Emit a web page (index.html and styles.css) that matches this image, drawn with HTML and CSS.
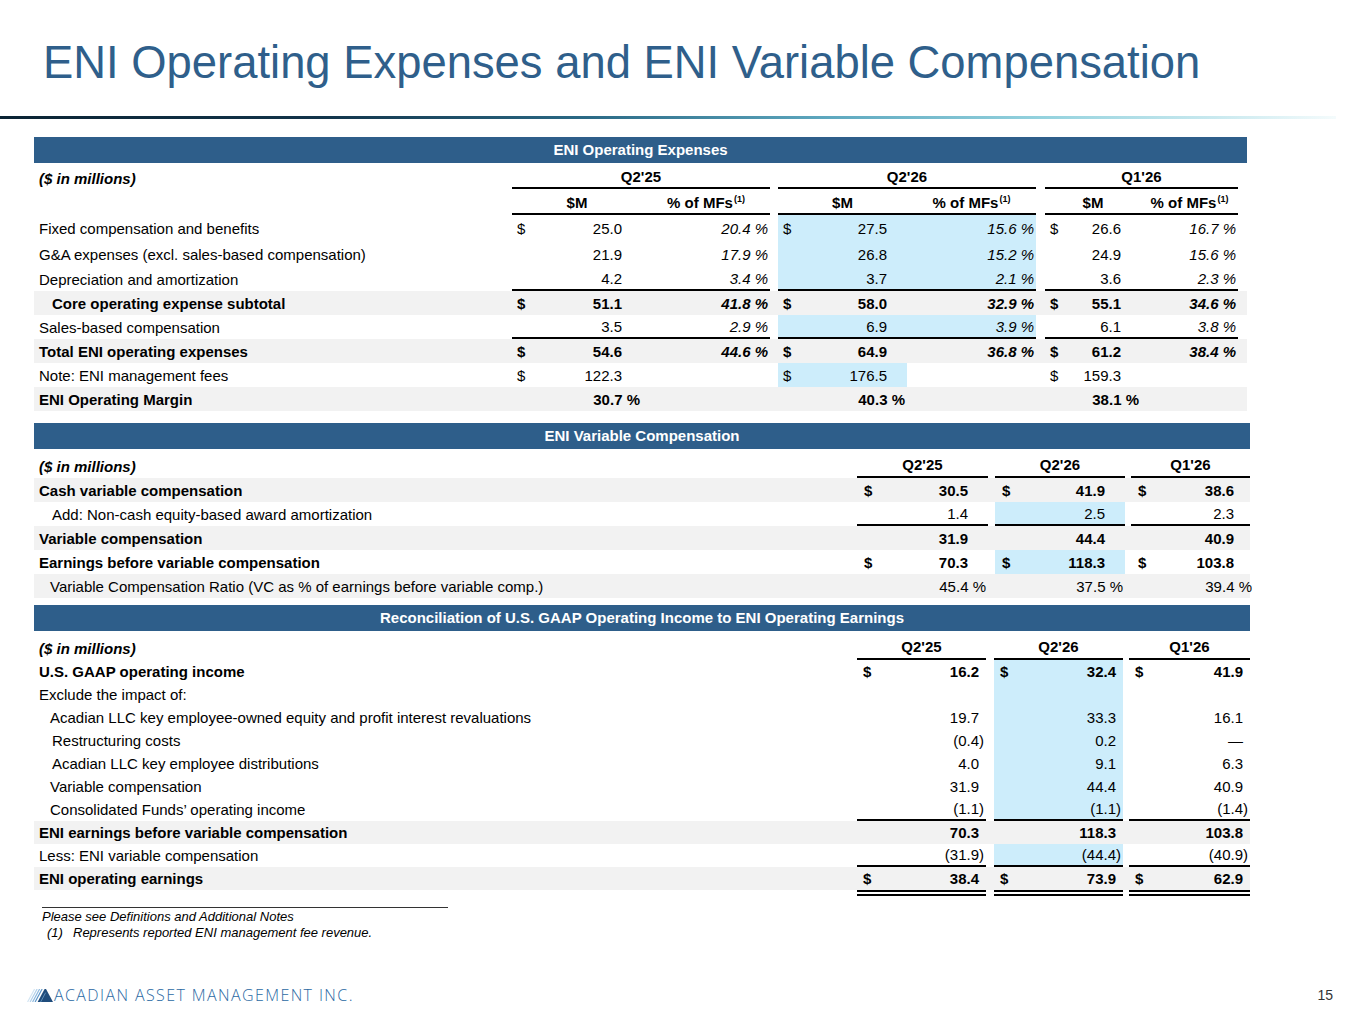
FILE: index.html
```html
<!DOCTYPE html>
<html>
<head>
<meta charset="utf-8">
<link rel="stylesheet" href="styles.css">
</head>
<body>
<h1 class="title">ENI Operating Expenses and ENI Variable Compensation</h1>
<div class="rule"></div>

<div class="tables">
  <!-- Table 1 -->
  <div class="tbl t1">
    <div class="bar">ENI Operating Expenses</div>
    <div class="row hdr h26">
      <div class="lbl b i">($ in millions)</div>
      <div class="ctr b ul span2">Q2'25</div><div></div>
      <div class="ctr b ul span2">Q2'26</div><div></div>
      <div class="ctr b ul span2">Q1'26</div><div></div>
    </div>
    <div class="row hdr h26">
      <div class="lbl"></div>
      <div class="ctr b ul">$M</div><div class="ctr b ul"><span>% of MFs<sup>(1)</sup></span></div><div></div>
      <div class="ctr b ul">$M</div><div class="ctr b ul"><span>% of MFs<sup>(1)</sup></span></div><div></div>
      <div class="ctr b ul">$M</div><div class="ctr b ul"><span>% of MFs<sup>(1)</sup></span></div><div></div>
    </div>
    <div class="row h26">
      <div class="lbl">Fixed compensation and benefits</div>
      <div class="m"><span>$</span><span>25.0</span></div><div class="p">20.4 %</div><div></div>
      <div class="m hl"><span>$</span><span>27.5</span></div><div class="p hl">15.6 %</div><div></div>
      <div class="m"><span>$</span><span>26.6</span></div><div class="p">16.7 %</div><div></div>
    </div>
    <div class="row h26">
      <div class="lbl">G&amp;A expenses (excl. sales-based compensation)</div>
      <div class="m"><span></span><span>21.9</span></div><div class="p">17.9 %</div><div></div>
      <div class="m hl"><span></span><span>26.8</span></div><div class="p hl">15.2 %</div><div></div>
      <div class="m"><span></span><span>24.9</span></div><div class="p">15.6 %</div><div></div>
    </div>
    <div class="row">
      <div class="lbl">Depreciation and amortization</div>
      <div class="m ul"><span></span><span>4.2</span></div><div class="p ul">3.4 %</div><div></div>
      <div class="m hl ul"><span></span><span>3.7</span></div><div class="p hl ul">2.1 %</div><div></div>
      <div class="m ul"><span></span><span>3.6</span></div><div class="p ul">2.3 %</div><div></div>
    </div>
    <div class="row band b">
      <div class="lbl ind2">Core operating expense subtotal</div>
      <div class="m"><span>$</span><span>51.1</span></div><div class="p">41.8 %</div><div></div>
      <div class="m"><span>$</span><span>58.0</span></div><div class="p">32.9 %</div><div></div>
      <div class="m"><span>$</span><span>55.1</span></div><div class="p">34.6 %</div><div></div>
    </div>
    <div class="row">
      <div class="lbl">Sales-based compensation</div>
      <div class="m ul"><span></span><span>3.5</span></div><div class="p ul">2.9 %</div><div></div>
      <div class="m hl ul"><span></span><span>6.9</span></div><div class="p hl ul">3.9 %</div><div></div>
      <div class="m ul"><span></span><span>6.1</span></div><div class="p ul">3.8 %</div><div></div>
    </div>
    <div class="row band b">
      <div class="lbl">Total ENI operating expenses</div>
      <div class="m"><span>$</span><span>54.6</span></div><div class="p">44.6 %</div><div></div>
      <div class="m"><span>$</span><span>64.9</span></div><div class="p">36.8 %</div><div></div>
      <div class="m"><span>$</span><span>61.2</span></div><div class="p">38.4 %</div><div></div>
    </div>
    <div class="row">
      <div class="lbl">Note: ENI management fees</div>
      <div class="m"><span>$</span><span>122.3</span></div><div class="p"></div><div></div>
      <div class="m hl"><span>$</span><span>176.5</span></div><div class="p"></div><div></div>
      <div class="m"><span>$</span><span>159.3</span></div><div class="p"></div><div></div>
    </div>
    <div class="row band b">
      <div class="lbl">ENI Operating Margin</div>
      <div class="m"><span></span><span>30.7<span class="pc">&nbsp;%</span></span></div><div></div><div></div>
      <div class="m"><span></span><span>40.3<span class="pc">&nbsp;%</span></span></div><div></div><div></div>
      <div class="m"><span></span><span>38.1<span class="pc">&nbsp;%</span></span></div><div></div><div></div>
    </div>
  </div>

  <!-- Table 2 -->
  <div class="tbl t2">
    <div class="bar">ENI Variable Compensation</div>
    <div class="row hdr h29">
      <div class="lbl b i">($ in millions)</div>
      <div class="ctr b ul">Q2'25</div><div></div>
      <div class="ctr b ul">Q2'26</div><div></div>
      <div class="ctr b ul">Q1'26</div>
    </div>
    <div class="row band b">
      <div class="lbl">Cash variable compensation</div>
      <div class="v"><span>$</span><span>30.5</span></div><div></div>
      <div class="v"><span>$</span><span>41.9</span></div><div></div>
      <div class="v last"><span>$</span><span>38.6</span></div>
    </div>
    <div class="row">
      <div class="lbl ind2">Add: Non-cash equity-based award amortization</div>
      <div class="v ul"><span></span><span>1.4</span></div><div></div>
      <div class="v ul hl"><span></span><span>2.5</span></div><div></div>
      <div class="v ul last"><span></span><span>2.3</span></div>
    </div>
    <div class="row band b">
      <div class="lbl">Variable compensation</div>
      <div class="v"><span></span><span>31.9</span></div><div></div>
      <div class="v"><span></span><span>44.4</span></div><div></div>
      <div class="v last"><span></span><span>40.9</span></div>
    </div>
    <div class="row b">
      <div class="lbl">Earnings before variable compensation</div>
      <div class="v"><span>$</span><span>70.3</span></div><div></div>
      <div class="v hl"><span>$</span><span>118.3</span></div><div></div>
      <div class="v last"><span>$</span><span>103.8</span></div>
    </div>
    <div class="row band">
      <div class="lbl ind1">Variable Compensation Ratio (VC as % of earnings before variable comp.)</div>
      <div class="v"><span></span><span>45.4<span class="pc">&nbsp;%</span></span></div><div></div>
      <div class="v"><span></span><span>37.5<span class="pc">&nbsp;%</span></span></div><div></div>
      <div class="v last"><span></span><span>39.4<span class="pc">&nbsp;%</span></span></div>
    </div>
  </div>

  <!-- Table 3 -->
  <div class="tbl t3">
    <div class="bar">Reconciliation of U.S. GAAP Operating Income to ENI Operating Earnings</div>
    <div class="row hdr h29">
      <div class="lbl b i">($ in millions)</div>
      <div class="ctr b ul">Q2'25</div><div></div>
      <div class="ctr b ul">Q2'26</div><div></div>
      <div class="ctr b ul">Q1'26</div>
    </div>
    <div class="row b">
      <div class="lbl">U.S. GAAP operating income</div>
      <div class="w"><span>$</span><span>16.2</span></div><div></div>
      <div class="w hl"><span>$</span><span>32.4</span></div><div></div>
      <div class="w"><span>$</span><span>41.9</span></div>
    </div>
    <div class="row">
      <div class="lbl">Exclude the impact of:</div>
      <div class="w"></div><div></div>
      <div class="w hl"></div><div></div>
      <div class="w"></div>
    </div>
    <div class="row">
      <div class="lbl ind1">Acadian LLC key employee-owned equity and profit interest revaluations</div>
      <div class="w"><span></span><span>19.7</span></div><div></div>
      <div class="w hl"><span></span><span>33.3</span></div><div></div>
      <div class="w"><span></span><span>16.1</span></div>
    </div>
    <div class="row">
      <div class="lbl ind2">Restructuring costs</div>
      <div class="w"><span></span><span>(0.4<span class="cp">)</span></span></div><div></div>
      <div class="w hl"><span></span><span>0.2</span></div><div></div>
      <div class="w"><span></span><span>—</span></div>
    </div>
    <div class="row">
      <div class="lbl ind2">Acadian LLC key employee distributions</div>
      <div class="w"><span></span><span>4.0</span></div><div></div>
      <div class="w hl"><span></span><span>9.1</span></div><div></div>
      <div class="w"><span></span><span>6.3</span></div>
    </div>
    <div class="row">
      <div class="lbl ind1">Variable compensation</div>
      <div class="w"><span></span><span>31.9</span></div><div></div>
      <div class="w hl"><span></span><span>44.4</span></div><div></div>
      <div class="w"><span></span><span>40.9</span></div>
    </div>
    <div class="row">
      <div class="lbl ind1">Consolidated Funds’ operating income</div>
      <div class="w ul"><span></span><span>(1.1<span class="cp">)</span></span></div><div></div>
      <div class="w ul hl"><span></span><span>(1.1<span class="cp">)</span></span></div><div></div>
      <div class="w ul"><span></span><span>(1.4<span class="cp">)</span></span></div>
    </div>
    <div class="row band b">
      <div class="lbl">ENI earnings before variable compensation</div>
      <div class="w"><span></span><span>70.3</span></div><div></div>
      <div class="w"><span></span><span>118.3</span></div><div></div>
      <div class="w"><span></span><span>103.8</span></div>
    </div>
    <div class="row">
      <div class="lbl">Less: ENI variable compensation</div>
      <div class="w ul"><span></span><span>(31.9<span class="cp">)</span></span></div><div></div>
      <div class="w ul hl"><span></span><span>(44.4<span class="cp">)</span></span></div><div></div>
      <div class="w ul"><span></span><span>(40.9<span class="cp">)</span></span></div>
    </div>
    <div class="row band b">
      <div class="lbl">ENI operating earnings</div>
      <div class="w"><span>$</span><span>38.4</span></div><div></div>
      <div class="w"><span>$</span><span>73.9</span></div><div></div>
      <div class="w"><span>$</span><span>62.9</span></div>
    </div>
    <div class="row dblrow">
      <div></div>
      <div class="dbl"></div><div></div>
      <div class="dbl"></div><div></div>
      <div class="dbl"></div>
    </div>
  </div>
</div>

<div class="notes">
  <div>Please see Definitions and Additional Notes</div>
  <div class="n2"><span class="num">(1)</span>Represents reported ENI management fee revenue.</div>
</div>

<div class="footer">
  <div class="logo">
    <svg class="mark" width="26" height="13" viewBox="0 0 26 13" aria-hidden="true">
      <g stroke-width="1.2" fill="none">
        <line x1="0.6" y1="13" x2="7.6" y2="0" stroke="#d3e5f3"/>
        <line x1="3.1" y1="13" x2="10.1" y2="0" stroke="#b2d0ea"/>
        <line x1="5.6" y1="13" x2="12.6" y2="0" stroke="#8db8de"/>
        <line x1="8.1" y1="13" x2="15.1" y2="0" stroke="#5f98cb"/>
      </g>
      <polygon points="10.6,13 17.6,0 19,0 26,13" fill="#1f4c7c"/>
      <line x1="13.6" y1="13" x2="18.6" y2="3.7" stroke="#6f9fca" stroke-width="0.8"/>
    </svg>
    <span class="logotext">ACADIAN ASSET MANAGEMENT INC.</span>
  </div>
  <div class="pageno">15</div>
</div>
</body>
</html>
```

FILE: styles.css
```css
* { box-sizing: border-box; }
body {
  margin: 0;
  background: #fff;
  width: 1365px;
  font-family: "Liberation Sans", Arial, sans-serif;
  color: #000;
}
.title {
  margin: 0;
  padding: 37px 0 0 43px;
  font-size: 45.4px;
  line-height: 52px;
  font-weight: normal;
  color: #2f5f8b;
  white-space: nowrap;
}
.rule {
  margin-top: 27px;
  width: 1336px;
  height: 3px;
  background: linear-gradient(to right, #0b2434 0%, #12344a 24%, #2b6a86 44%, #5ea8bf 62%, #94d2de 78%, #c9e9ef 91%, #f4fbfc 100%);
}
.tables { margin: 18px 0 0 34px; }
.tbl { font-size: 15px; }
.t1 { width: 1213px; }
.t2 { width: 1216px; margin-top: 12px; }
.t3 { width: 1216px; margin-top: 7px; }
.bar {
  height: 26px;
  background: #2e5e8a;
  color: #fff;
  font-weight: bold;
  text-align: center;
  line-height: 26px;
}
.row { display: grid; height: 24px; }
.t3 .row { height: 23px; }
.row.h26 { height: 26px; }
.t2 .row.h29, .t3 .row.h29 { height: 29px; }
.t1 .row { grid-template-columns: 478px 130px 128px 8px 129px 129px 9px 96px 97px 9px; }
.t2 .row { grid-template-columns: 823px 131px 7px 130px 6px 119px; }
.t3 .row { grid-template-columns: 823px 129px 8px 129px 6px 121px; }
.row > div { display: flex; align-items: center; white-space: nowrap; }
.hdr > div { align-items: flex-end; padding-bottom: 2px; }
.h29 > div { padding-bottom: 3px; }
.span2 { grid-column: span 2; }
.lbl { padding-left: 5px; }
.ind1 { padding-left: 16px; }
.ind2 { padding-left: 18px; }
.band { background: #f2f2f2; }
.hl { background: #cdedfb; }
.ul { border-bottom: 2px solid #000; }
.b { font-weight: bold; }
.i { font-style: italic; }
.row > .ctr { justify-content: center; }
.m { justify-content: space-between; padding: 0 20px 0 5px; }
.p { justify-content: flex-end; padding-right: 2px; font-style: italic; }
.v { justify-content: space-between; padding: 0 20px 0 7px; }
.v.last { padding-right: 16px; padding-left: 7px; }
.w { justify-content: space-between; padding: 0 7px 0 6px; }
.pc { margin-right: -18px; }
.cp { margin-right: -5px; }
sup { font-size: 9px; line-height: 0; vertical-align: 6px; margin-left: 1px; }
.dblrow { height: 6px !important; }
.dbl { border-top: 2px solid #000; border-bottom: 2px solid #000; }
.notes {
  margin: 11px 0 0 42px;
  width: 406px;
  border-top: 1px solid #333;
  padding-top: 1px;
  font-size: 13px;
  font-style: italic;
  line-height: 16px;
}
.n2 { padding-left: 5px; }
.n2 .num { display: inline-block; width: 26px; }
.footer {
  margin-top: 44px;
  display: flex;
  justify-content: space-between;
  align-items: center;
  padding: 0 32px 0 27px;
  height: 20px;
}
.logo { display: flex; align-items: center; }
.mark { display: block; }
.logotext {
  margin-left: 1px;
  font-family: "Open Sans", sans-serif;
  font-weight: 300;
  font-size: 16px;
  letter-spacing: 1.4px;
  color: #2b69a3;
  line-height: 20px;
}
.pageno { font-size: 14px; color: #333; }
```
